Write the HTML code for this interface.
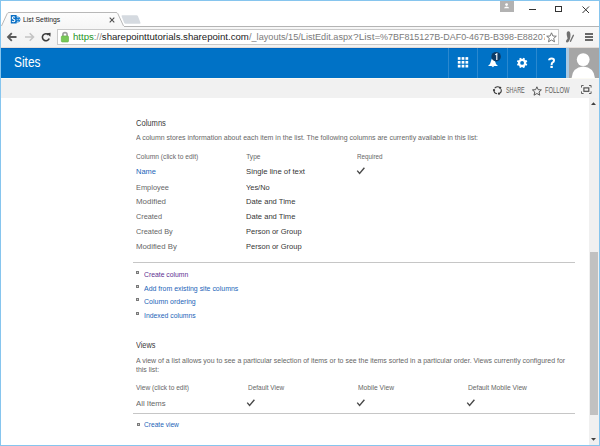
<!DOCTYPE html>
<html><head><meta charset="utf-8">
<style>
*{margin:0;padding:0;box-sizing:border-box}
html,body{width:600px;height:446px;overflow:hidden;background:#fff;font-family:"Liberation Sans",sans-serif;position:relative}
.a{position:absolute;white-space:nowrap;line-height:1;transform-origin:0 0}
#win{position:absolute;left:0;top:0;width:600px;height:446px;border:1px solid #86c5ee;pointer-events:none}
#tabstrip{position:absolute;left:0;top:0;width:600px;height:27px;background:#fff}
#toolbar{position:absolute;left:0;top:26px;width:600px;height:22px;background:linear-gradient(#f7f7f7,#f2f2f2);border-top:1px solid #b4b4b4;border-bottom:1px solid #e2dcd8}
#omni{position:absolute;left:57px;top:29px;width:502px;height:16px;background:#fff;border:1px solid #c9c9c9}
#suite{position:absolute;left:0;top:48px;width:600px;height:30px;background:#0072c6}
.sep{position:absolute;top:48px;width:1px;height:30px;background:#2a88cf}
#ribbon{position:absolute;left:0;top:78px;width:600px;height:20px;background:#f1f1f1;border-top:1px solid #fbfaf3}
#sb{position:absolute;left:589px;top:98px;width:10px;height:347px;background:#f0f0f0}
#thumb{position:absolute;left:590px;top:252px;width:8px;height:162.5px;background:#c1c1c1}
.rule{position:absolute;left:133px;width:442px;height:1px;background:#c6c6c6}
.bul{position:absolute;width:3px;height:3px;border:1px solid #7a7a7a;background:#cfcfcf}
</style></head><body>
<div id="tabstrip"></div>
<div id="toolbar"></div>
<!-- tab -->
<svg class="a" style="left:0;top:0" width="150" height="28">
  <defs><linearGradient id="tg" x1="0" y1="0" x2="0" y2="1"><stop offset="0" stop-color="#fdfdfd"/><stop offset="1" stop-color="#f6f6f6"/></linearGradient></defs><path d="M1 27 L7.2 13.6 Q7.8 12.5 9 12.5 L116 12.5 Q117.2 12.5 117.8 13.6 L124 27" fill="url(#tg)" stroke="#b8b8b8" stroke-width="1"/>
  <rect x="0" y="26" width="124" height="2" fill="#f6f6f6"/>
  <path d="M122.3 15.2 L136.5 15.2 Q137.6 15.2 138 16.3 L140.5 22.8 Q140.8 23.8 139.7 23.8 L125.5 23.8 Q124.5 23.8 124.1 22.8 L121.6 16.3 Q121.3 15.2 122.3 15.2 Z" fill="#d5dae0"/>
</svg>
<svg class="a" style="left:10px;top:14px" width="11" height="11" viewBox="0 0 11 11">
  <circle cx="7.4" cy="5.4" r="3" fill="#1a7fd1"/>
  <rect x="0.8" y="1" width="5.8" height="8.6" rx="0.4" fill="#0a6fc4"/>
  <path d="M5 3.3 Q4.4 2.8 3.6 2.8 Q2.3 2.8 2.3 3.9 Q2.3 4.8 3.6 5.3 Q4.9 5.8 4.9 6.6 Q4.9 7.7 3.6 7.7 Q2.6 7.7 2.1 7.1" fill="none" stroke="#fff" stroke-width="1.1"/>
  <g fill="#fff" opacity="0.85"><circle cx="7.9" cy="3.4" r="0.55"/><circle cx="9.3" cy="5.4" r="0.55"/><circle cx="7.9" cy="7.4" r="0.55"/><circle cx="7.1" cy="5.4" r="0.5"/></g>
</svg>
<svg class="a" style="left:109px;top:17px" width="6" height="6"><path d="M0.7 0.7L5.3 5.3M5.3 0.7L0.7 5.3" stroke="#505050" stroke-width="1.1"/></svg>
<!-- window controls -->
<div class="a" style="left:500px;top:0;width:14px;height:12px;background:#b2b2b2"></div>
<svg class="a" style="left:503px;top:2px" width="8" height="8"><circle cx="3.6" cy="2.6" r="1.4" fill="#fff"/><path d="M1 6.2 Q1.4 4.6 3.6 4.6 Q5.8 4.6 6.2 6.2Z" fill="#fff"/></svg>
<div class="a" style="left:529px;top:9px;width:7px;height:1px;background:#333"></div>
<div class="a" style="left:555px;top:6px;width:7px;height:6px;border:1px solid #333"></div>
<svg class="a" style="left:582px;top:5.5px" width="8" height="8"><path d="M0.5 0.5L7 7M7 0.5L0.5 7" stroke="#333" stroke-width="1"/></svg>
<!-- nav buttons -->
<svg class="a" style="left:6px;top:32px" width="50" height="10">
  <path d="M2 5H10.5M5.8 1.2L2 5L5.8 8.8" fill="none" stroke="#5a5a5a" stroke-width="1.8"/>
  <path d="M19 5H27.5M23.7 1.2L27.5 5L23.7 8.8" fill="none" stroke="#c4c4c4" stroke-width="1.6"/>
  <path d="M42.5 2.9A3.5 3.5 0 1 0 43.2 6.4" fill="none" stroke="#3c3c3c" stroke-width="1.6"/>
  <path d="M40.6 1.2L44.6 0.8L44.4 4.8Z" fill="#3c3c3c"/>
</svg>
<div id="omni"></div>
<svg class="a" style="left:60px;top:31px" width="10" height="12">
  <path d="M2.9 5V3.7A2.1 2.1 0 0 1 7.1 3.7V5" fill="none" stroke="#a0a0a0" stroke-width="1.7"/>
  <rect x="1.3" y="4.9" width="7.2" height="6.1" rx="1" fill="#78c858" stroke="#5fae40" stroke-width="0.6"/>
</svg>
<!-- suite bar -->
<div id="suite"></div>
<div class="a" style="left:0;top:48px;width:600px;height:1px;background:#0066c0"></div>
<div class="sep" style="left:448px"></div>
<div class="sep" style="left:477px"></div>
<div class="sep" style="left:507px"></div>
<div class="sep" style="left:536px"></div>
<div class="a" style="left:566px;top:48px;width:3px;height:30px;background:#a9c9e2"></div>
<div class="a" style="left:569px;top:48px;width:30px;height:30px;background:#a6a6a6;overflow:hidden">
  <svg width="30" height="30"><circle cx="14.2" cy="11.6" r="6.4" fill="#fff"/><path d="M2.5 31 Q3 19.5 14.2 18.6 Q25.4 19.5 26 31Z" fill="#fff"/></svg>
</div>
<svg class="a" style="left:457px;top:57px" width="12" height="12"><g fill="#fff"><rect x="0.80" y="0.10" width="2.7" height="2.7"/><rect x="4.65" y="0.10" width="2.7" height="2.7"/><rect x="8.50" y="0.10" width="2.7" height="2.7"/><rect x="0.80" y="3.95" width="2.7" height="2.7"/><rect x="4.65" y="3.95" width="2.7" height="2.7"/><rect x="8.50" y="3.95" width="2.7" height="2.7"/><rect x="0.80" y="7.80" width="2.7" height="2.7"/><rect x="4.65" y="7.80" width="2.7" height="2.7"/><rect x="8.50" y="7.80" width="2.7" height="2.7"/></g></svg>
<svg class="a" style="left:486px;top:50px" width="16" height="20">
  <path d="M2 16 Q4.5 14.5 5 11 Q5.6 8 7 8 Q8.4 8 9 11 Q9.5 14.5 12 16Z" fill="#fff"/>
  <path d="M5.4 15.8 Q6.9 18.6 8.4 15.8Z" fill="#dbe9f7"/>
  <circle cx="10.1" cy="6.7" r="4.75" fill="#0d3b67"/>
  <path d="M9.2 4.9L10.8 3.8V9.9" fill="none" stroke="#fff" stroke-width="1.15"/>
</svg>
<svg class="a" style="left:516px;top:56.5px" width="12" height="12" viewBox="0 0 12 12">
  <g fill="#fff" transform="translate(6.1 5.9) rotate(22.5)">
    <circle r="4.1"/>
    <rect x="-1" y="-5.2" width="2" height="10.4"/>
    <rect x="-1" y="-5.2" width="2" height="10.4" transform="rotate(45)"/>
    <rect x="-1" y="-5.2" width="2" height="10.4" transform="rotate(90)"/>
    <rect x="-1" y="-5.2" width="2" height="10.4" transform="rotate(135)"/>
  </g>
  <circle cx="6.1" cy="5.9" r="1.9" fill="#0072c6"/>
</svg>
<svg class="a" style="left:545px;top:55px" width="14" height="15"><path d="M4.1 5.2 Q4.2 3.6 6.6 3.6 Q9 3.6 9 5.4 Q9 6.7 7.7 7.4 Q6.6 8 6.6 9.9" fill="none" stroke="#fff" stroke-width="2"/><rect x="5.4" y="10.8" width="2.4" height="2.2" fill="#fff"/></svg>
<!-- ribbon -->
<div id="ribbon"></div>
<svg class="a" style="left:492px;top:85px" width="11" height="11" viewBox="0 0 11 11"><g fill="none" stroke="#3a3a3a" stroke-width="1.05"><path d="M2.65 3.24A3.6 3.6 0 0 1 8.19 2.80"/><path d="M8.98 4.07A3.6 3.6 0 0 1 6.95 8.64"/><path d="M4.97 8.85A3.6 3.6 0 0 1 2.01 5.05"/></g><g fill="#3a3a3a"><circle cx="8.19" cy="2.80" r="1.15"/><circle cx="6.95" cy="8.64" r="1.15"/><circle cx="2.01" cy="5.05" r="1.15"/></g></svg>
<svg class="a" style="left:532px;top:85.5px" width="11" height="11"><path d="M4.9 0.8L6.2 3.7L9.4 3.9L7 6L7.8 9.2L4.9 7.5L2 9.2L2.8 6L0.4 3.9L3.6 3.7Z" fill="none" stroke="#505050" stroke-width="0.95" stroke-linejoin="round"/></svg>
<svg class="a" style="left:581px;top:84.5px" width="11" height="10"><path d="M0.5 2.6V0.5H2.6M8 0.5H10.1V2.6M10.1 6.4V8.5H8M2.6 8.5H0.5V6.4" fill="none" stroke="#5a5a5a" stroke-width="0.95"/><rect x="2.9" y="2.9" width="4.9" height="3.4" fill="none" stroke="#4a4a4a" stroke-width="1.15"/></svg>
<!-- scrollbar -->
<div id="sb"></div>
<div id="thumb"></div>
<svg class="a" style="left:591.3px;top:102.2px" width="5" height="3"><path d="M0 3L2.5 0.2L5 3Z" fill="#404040"/></svg>
<svg class="a" style="left:591.3px;top:438px" width="5" height="3"><path d="M0 0L2.5 2.8L5 0Z" fill="#404040"/></svg>
<!-- content -->
<svg class="a" style="left:356px;top:167px" width="10" height="8"><path d="M1.2 3.6L3.6 6.4L8.4 0.7" fill="none" stroke="#4a4a4a" stroke-width="1.4"/></svg>
<div class="rule" style="top:262px"></div>
<div class="bul" style="left:136px;top:271px"></div>
<div class="bul" style="left:136px;top:285px"></div>
<div class="bul" style="left:136px;top:298px"></div>
<div class="bul" style="left:136px;top:311.5px"></div>
<svg class="a" style="left:246px;top:398.5px" width="10" height="8"><path d="M1.2 3.6L3.6 6.4L8.4 0.7" fill="none" stroke="#4a4a4a" stroke-width="1.4"/></svg>
<svg class="a" style="left:356px;top:398.5px" width="10" height="8"><path d="M1.2 3.6L3.6 6.4L8.4 0.7" fill="none" stroke="#4a4a4a" stroke-width="1.4"/></svg>
<svg class="a" style="left:466px;top:398.5px" width="10" height="8"><path d="M1.2 3.6L3.6 6.4L8.4 0.7" fill="none" stroke="#4a4a4a" stroke-width="1.4"/></svg>
<div class="rule" style="top:413px"></div>
<div class="bul" style="left:136.5px;top:423px"></div>
<div class="a" style="left:22.9px;top:15.78px;font-size:7.7px;color:#1e1e1e;transform:scaleX(0.8893);">List Settings</div>
<div class="a" style="left:72.7px;top:33.01px;font-size:9.2px;color:#222;transform:scaleX(1.0464);"><span style="color:#259425">https</span><span style="color:#8a8a8a">://</span>sharepointtutorials.sharepoint.com</div>
<div class="a" style="left:248.75px;top:33.01px;font-size:9.2px;color:#7a7a7a;transform:scaleX(0.9945);">/_layouts/15/ListEdit.aspx</div>
<div class="a" style="left:352.5px;top:33.01px;font-size:9.2px;color:#7a7a7a;transform:scaleX(1.1086);">?List=</div>
<div class="a" style="left:380px;top:33.01px;font-size:9.2px;color:#7a7a7a;transform:scaleX(0.9747);">%7BF815127B-DAF0-467B-B398-E88207</div>
<div class="a" style="left:14px;top:56.42px;font-size:13.8px;color:#fff;transform:scaleX(0.8637);">Sites</div>
<div class="a" style="left:505.6px;top:87.16px;font-size:8.2px;color:#606060;transform:scaleX(0.6619);">SHARE</div>
<div class="a" style="left:545px;top:87.16px;font-size:8.2px;color:#606060;transform:scaleX(0.7105);">FOLLOW</div>
<div class="a" style="left:135.7px;top:119.22px;font-size:8.6px;color:#3a3a3a;transform:scaleX(0.8811);">Columns</div>
<div class="a" style="left:136px;top:134.04px;font-size:7.4px;color:#666;transform:scaleX(0.9423);">A column stores information about each item in the list. The following columns are currently available in this list:</div>
<div class="a" style="left:136px;top:153.91px;font-size:6.6px;color:#666;transform:scaleX(1.0111);">Column (click to edit)</div>
<div class="a" style="left:246.2px;top:153.91px;font-size:6.6px;color:#666;">Type</div>
<div class="a" style="left:356.9px;top:153.91px;font-size:6.6px;color:#666;transform:scaleX(0.9558);">Required</div>
<div class="a" style="left:136px;top:168.18px;font-size:7.7px;color:#1b64b8;transform:scaleX(0.9737);">Name</div>
<div class="a" style="left:246px;top:168.18px;font-size:7.7px;color:#363636;transform:scaleX(1.0061);">Single line of text</div>
<div class="a" style="left:136px;top:183.88px;font-size:7.7px;color:#666;transform:scaleX(0.9637);">Employee</div>
<div class="a" style="left:246px;top:183.88px;font-size:7.7px;color:#363636;transform:scaleX(0.9656);">Yes/No</div>
<div class="a" style="left:136px;top:198.48px;font-size:7.7px;color:#666;transform:scaleX(1.0307);">Modified</div>
<div class="a" style="left:246px;top:198.48px;font-size:7.7px;color:#363636;transform:scaleX(0.9885);">Date and Time</div>
<div class="a" style="left:136px;top:213.18px;font-size:7.7px;color:#666;transform:scaleX(0.9491);">Created</div>
<div class="a" style="left:246px;top:213.18px;font-size:7.7px;color:#363636;transform:scaleX(0.9885);">Date and Time</div>
<div class="a" style="left:136px;top:227.98px;font-size:7.7px;color:#666;transform:scaleX(0.9554);">Created By</div>
<div class="a" style="left:246px;top:227.98px;font-size:7.7px;color:#363636;transform:scaleX(0.9785);">Person or Group</div>
<div class="a" style="left:136px;top:243.18px;font-size:7.7px;color:#666;transform:scaleX(1.0166);">Modified By</div>
<div class="a" style="left:246px;top:243.18px;font-size:7.7px;color:#363636;transform:scaleX(0.9785);">Person or Group</div>
<div class="a" style="left:143.7px;top:271.24px;font-size:7.4px;color:#5e2f92;transform:scaleX(0.9226);">Create column</div>
<div class="a" style="left:143.7px;top:284.74px;font-size:7.4px;color:#1b64b8;transform:scaleX(0.9407);">Add from existing site columns</div>
<div class="a" style="left:143.7px;top:298.24px;font-size:7.4px;color:#1b64b8;transform:scaleX(0.9469);">Column ordering</div>
<div class="a" style="left:143.7px;top:311.74px;font-size:7.4px;color:#1b64b8;transform:scaleX(0.9259);">Indexed columns</div>
<div class="a" style="left:135.9px;top:341.12px;font-size:8.6px;color:#3a3a3a;transform:scaleX(0.8514);">Views</div>
<div class="a" style="left:136px;top:356.64px;font-size:7.4px;color:#666;transform:scaleX(0.9423);">A view of a list allows you to see a particular selection of items or to see the items sorted in a particular order. Views currently configured for</div>
<div class="a" style="left:136px;top:366.04px;font-size:7.4px;color:#666;transform:scaleX(0.9423);">this list:</div>
<div class="a" style="left:136px;top:385.31px;font-size:6.6px;color:#666;">View (click to edit)</div>
<div class="a" style="left:247.9px;top:385.31px;font-size:6.6px;color:#666;transform:scaleX(0.9802);">Default View</div>
<div class="a" style="left:357.6px;top:385.31px;font-size:6.6px;color:#666;transform:scaleX(1.0151);">Mobile View</div>
<div class="a" style="left:467.7px;top:385.31px;font-size:6.6px;color:#666;transform:scaleX(1.0136);">Default Mobile View</div>
<div class="a" style="left:136px;top:399.78px;font-size:7.7px;color:#666;transform:scaleX(1.0061);">All Items</div>
<div class="a" style="left:143.9px;top:420.84px;font-size:7.4px;color:#1b64b8;transform:scaleX(0.8932);">Create view</div>

<div class="a" style="left:545px;top:30px;width:13px;height:14px;background:#fff"></div>
<svg class="a" style="left:545.5px;top:31.6px" width="11" height="11"><path d="M5.5 0.8L6.9 4L10.3 4.2L7.7 6.4L8.5 9.8L5.5 8L2.5 9.8L3.3 6.4L0.7 4.2L4.1 4Z" fill="none" stroke="#6a6a6a" stroke-width="0.9" stroke-linejoin="round"/></svg>
<svg class="a" style="left:562px;top:29px" width="16" height="16" viewBox="0 0 16 16">
<path d="M6.4 2.3C8.3 2.3 8.7 5 8.4 7.5C8.2 9.5 7.5 11.5 6.5 12.8C5.6 13.9 4.2 13.8 4 12.8C3.8 11.6 5 10.4 5.6 9.6C5.2 8 4.6 6.2 4.7 4.3C4.8 3 5.4 2.3 6.4 2.3Z" fill="#707070"/>
<path d="M11.4 6.3L8.5 12.3" stroke="#707070" stroke-width="1.4" stroke-linecap="round" fill="none"/>
</svg>
<svg class="a" style="left:585px;top:33px" width="8" height="8"><path d="M0 1H8M0 4H8M0 7H8" stroke="#3a3a3a" stroke-width="1.4"/></svg>
<div id="win"></div>
</body></html>
